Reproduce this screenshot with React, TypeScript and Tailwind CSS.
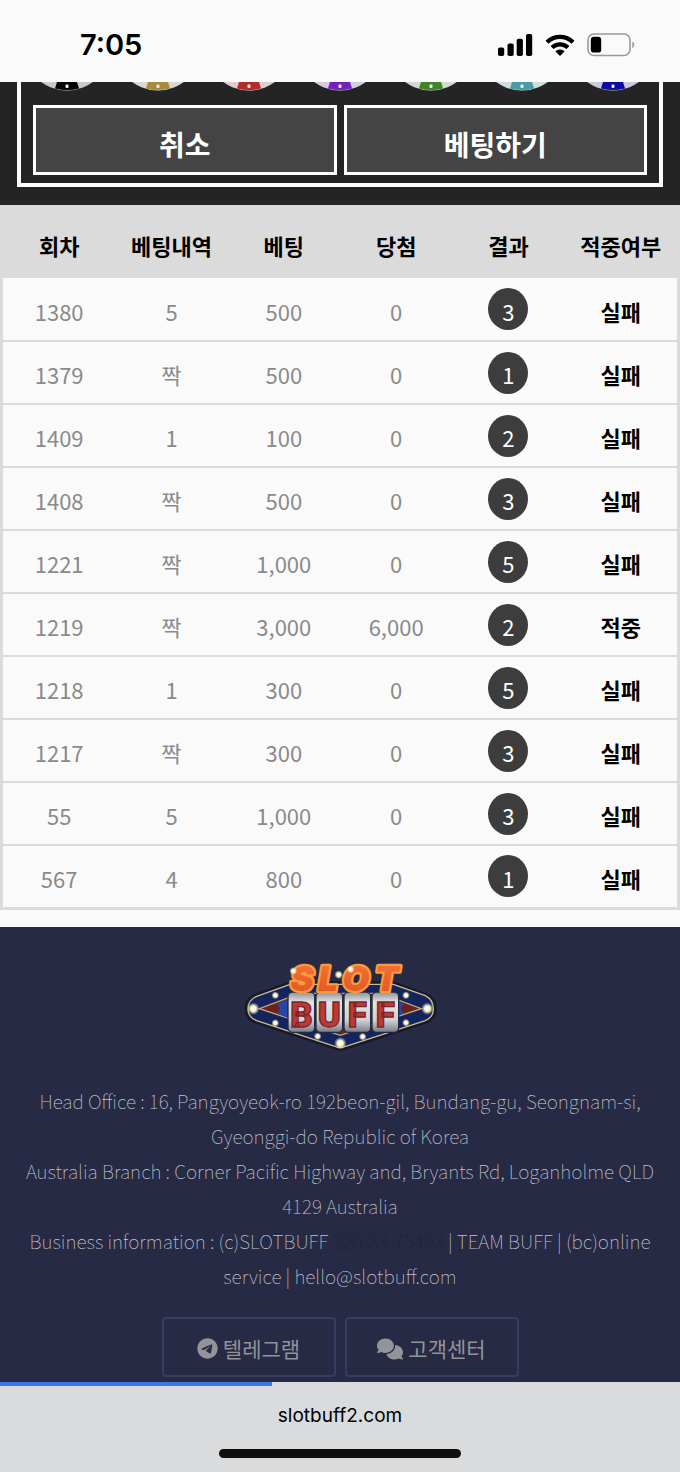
import type { JSX } from 'react';
import clsx from 'clsx';
import { FaComments, FaTelegram } from 'react-icons/fa6';

interface IBetRecord {
  round: string;
  pick: string;
  bet: string;
  win: string;
  result: number;
  status: string;
}

const CHIP_COLORS = [
  { body: '#c9c9cc', mark: '#050505' },
  { body: '#dcd8cf', mark: '#a78b3c' },
  { body: '#dfcccf', mark: '#b52b28' },
  { body: '#d5cddd', mark: '#761fbb' },
  { body: '#d2dad0', mark: '#3f8526' },
  { body: '#cddcde', mark: '#499ba5' },
  { body: '#cbcbdd', mark: '#0c0ca4' },
];

const COLUMNS = ['회차', '베팅내역', '베팅', '당첨', '결과', '적중여부'];

const RECORDS: IBetRecord[] = [
  { round: '1380', pick: '5', bet: '500', win: '0', result: 3, status: '실패' },
  { round: '1379', pick: '짝', bet: '500', win: '0', result: 1, status: '실패' },
  { round: '1409', pick: '1', bet: '100', win: '0', result: 2, status: '실패' },
  { round: '1408', pick: '짝', bet: '500', win: '0', result: 3, status: '실패' },
  { round: '1221', pick: '짝', bet: '1,000', win: '0', result: 5, status: '실패' },
  { round: '1219', pick: '짝', bet: '3,000', win: '6,000', result: 2, status: '적중' },
  { round: '1218', pick: '1', bet: '300', win: '0', result: 5, status: '실패' },
  { round: '1217', pick: '짝', bet: '300', win: '0', result: 3, status: '실패' },
  { round: '55', pick: '5', bet: '1,000', win: '0', result: 3, status: '실패' },
  { round: '567', pick: '4', bet: '800', win: '0', result: 1, status: '실패' },
];

const LOGO_BULBS = [
  [70, 188, 11],
  [136, 148, 7],
  [136, 231, 7],
  [263, 271, 7],
  [331, 292, 11],
  [398, 272, 7],
  [528, 230, 7],
  [528, 148, 7],
  [592, 188, 11],
];

function StatusBar(): JSX.Element {
  return (
    <header className="flex h-[82px] items-center justify-between bg-[#fafafa] pt-2 pr-[45px] pl-[80px]">
      <time className="font-['Inter',sans-serif] text-[29px] font-semibold text-black">
        7:05
      </time>
      <div className="flex items-center gap-3">
        <svg viewBox="0 0 35 22" className="h-[22px] w-[35px]" fill="#000">
          <rect x="0" y="13.5" width="6.2" height="8.5" rx="1.8" />
          <rect x="9.5" y="9.5" width="6.2" height="12.5" rx="1.8" />
          <rect x="18.7" y="4.8" width="6.2" height="17.2" rx="1.8" />
          <rect x="28" y="0" width="6.2" height="22" rx="1.8" />
        </svg>
        <svg viewBox="0 0 30 22" className="h-[22px] w-[30px]" fill="none" stroke="#000">
          <path d="M2 8.2a18.5 18.5 0 0 1 26 0" strokeWidth="4.2" />
          <path d="M7 13.6a11.4 11.4 0 0 1 16 0" strokeWidth="4.2" />
          <path d="M10.3 17.3a6.8 6.8 0 0 1 9.4 0L15 22z" fill="#000" stroke="none" />
        </svg>
        <svg viewBox="0 0 48 24" className="h-[24px] w-[48px]">
          <rect x="1" y="1" width="42" height="21.5" rx="6" fill="none" stroke="#999" strokeWidth="1.6" />
          <rect x="3.8" y="3.8" width="10.4" height="15.8" rx="3.2" fill="#000" />
          <path d="M45.3 8.5c2.6 1 2.6 5.6 0 6.6z" fill="#999" />
        </svg>
      </div>
    </header>
  );
}

function BetPanel(): JSX.Element {
  const buttonClass = clsx(
    'h-[70px] flex-1 border-[3px] border-white bg-[#444] pt-2',
    'text-[28px] font-bold text-white',
  );

  return (
    <section className="bg-[#242424] px-[17px] pb-[18px]">
      <div className="border-4 border-t-0 border-white px-3 pb-2">
        <div className="-mx-3 flex justify-around pb-[14px]">
          {CHIP_COLORS.map(({ body, mark }) => (
            <svg key={mark} viewBox="0 0 60 9" className="h-[9px] w-[60px]">
              <circle cx="30" cy="-35" r="43.5" fill={body} />
              <path d="M20 0h20l2 6.500q-12 3-24 0z" fill={mark} />
              <rect x="28.5" y="2.5" width="3" height="3.5" rx="1" fill="#eee" />
            </svg>
          ))}
        </div>
        <div className="flex gap-[7px]">
          <button type="button" className={buttonClass}>
            취소
          </button>
          <button type="button" className={buttonClass}>
            베팅하기
          </button>
        </div>
      </div>
    </section>
  );
}

function BetHistory(): JSX.Element {
  return (
    <div className="border-x-[3px] border-[#dbdbdb]">
      <table className="w-full table-fixed border-collapse text-center text-[22px]">
        <thead>
          <tr className="h-[73px] bg-[#dbdbdb] text-black">
            {COLUMNS.map((label) => (
              <th key={label} scope="col" className="p-0 pt-2 font-bold whitespace-nowrap">
                {label}
              </th>
            ))}
          </tr>
        </thead>
        <tbody>
          {RECORDS.map((record) => (
            <tr
              key={record.round}
              className="h-[63px] border-b-2 border-[#dbdbdb] bg-[#fafafa] text-[#8a8a8a] last:border-b-[3px]"
            >
              <td className="p-0 pt-1">{record.round}</td>
              <td className="p-0 pt-1">{record.pick}</td>
              <td className="p-0 pt-1">{record.bet}</td>
              <td className="p-0 pt-1">{record.win}</td>
              <td className="p-0">
                <span className="mx-auto flex h-[42px] w-[40px] items-center justify-center rounded-[50%] bg-[#3d3d3d] pt-1 text-white">
                  {record.result}
                </span>
              </td>
              <td className="p-0 pt-1 font-bold text-black">{record.status}</td>
            </tr>
          ))}
        </tbody>
      </table>
    </div>
  );
}

function Logo(): JSX.Element {
  return (
    <svg
      viewBox="0 0 660 345"
      role="img"
      aria-label="Slot Buff"
      className="mx-auto h-[115px] w-[220px]"
    >
      <defs>
        <linearGradient id="reel" x1="0" y1="0" x2="0" y2="1">
          <stop offset="0" stopColor="#8d8f96" />
          <stop offset="0.25" stopColor="#e4e4e6" />
          <stop offset="0.7" stopColor="#d0d1d5" />
          <stop offset="1" stopColor="#777a84" />
        </linearGradient>
        <linearGradient id="flame" x1="0" y1="0" x2="0" y2="1">
          <stop offset="0" stopColor="#f2793c" />
          <stop offset="1" stopColor="#e2531f" />
        </linearGradient>
        <radialGradient id="bulb">
          <stop offset="0" stopColor="#fff" />
          <stop offset="0.45" stopColor="#fdf6cf" />
          <stop offset="1" stopColor="#e8dca0" stopOpacity="0" />
        </radialGradient>
      </defs>
      <path
        d="M180 112L76 150Q50 160 50 188T76 226L310 303Q331 313 352 303L590 226Q614 216 614 188T590 148L490 112Z"
        fill="#101d55"
        stroke="#17192a"
        strokeWidth="12"
        strokeLinejoin="round"
      />
      <path
        d="M180 115L80 151Q54 162 54 188T80 224L312 300Q331 309 350 300L586 224Q610 214 610 188T586 149L490 115Z"
        fill="#14245f"
        stroke="#c9bd8c"
        strokeWidth="4"
      />
      <path
        d="M88 188L210 142H452L574 188L331 268Z"
        fill="#6d211d"
        stroke="#b9a977"
        strokeWidth="4"
      />
      <path d="M140 175q18 13 0 26l32 14v-54z" fill="#2447a8" />
      <path d="M522 175q-18 13 0 26l-30 14v-54z" fill="#2447a8" />
      {[174, 258, 342, 426].map((x) => (
        <rect
          key={x}
          x={x}
          y="138"
          width="80"
          height="121"
          rx="14"
          fill="url(#reel)"
          stroke="#252a40"
          strokeWidth="4"
        />
      ))}
      <g
        fill="#bc3936"
        stroke="#7c2528"
        strokeWidth="4"
        fontFamily="'Roboto', sans-serif"
        fontWeight="900"
        fontSize="104"
        textAnchor="middle"
      >
        <text x="214" y="242">B</text>
        <text x="298" y="242">U</text>
        <text x="382" y="242">F</text>
        <text x="466" y="242">F</text>
      </g>
      <g
        fill="url(#flame)"
        stroke="#fb9a3a"
        strokeWidth="14"
        paintOrder="stroke"
        strokeLinejoin="round"
        fontFamily="'Inter', sans-serif"
        fontWeight="900"
        fontStyle="italic"
        fontSize="104"
        textAnchor="middle"
      >
        <text x="216" y="134">S</text>
        <text x="294" y="134">L</text>
        <text x="378" y="134">O</text>
        <text x="470" y="134">T</text>
      </g>
      {LOGO_BULBS.map(([x, y, r]) => (
        <circle key={`${x}-${y}`} cx={x} cy={y} r={r * 1.7} fill="url(#bulb)" />
      ))}
      <circle cx="190" cy="75" r="12" fill="url(#bulb)" />
      <circle cx="326" cy="86" r="13" fill="url(#bulb)" />
      <circle cx="362" cy="70" r="12" fill="url(#bulb)" />
    </svg>
  );
}

function Footer(): JSX.Element {
  const linkClass = clsx(
    'flex h-[60px] w-[174px] items-center justify-center gap-[5px] rounded border-2 border-[#3a3a63] pt-1',
    'text-[21px] text-[#939399]',
  );

  return (
    <footer className="bg-[#262a45] px-5 pt-[19px] pb-[5px]">
      <Logo />
      <address className="mt-[22px] text-center text-[19px] leading-[35px] font-thin text-[#c4c5cc] not-italic">
        <p>
          Head Office : 16, Pangyoyeok-ro 192beon-gil, Bundang-gu, Seongnam-si,
          <br />
          Gyeonggi-do Republic of Korea
        </p>
        <p>
          Australia Branch : Corner Pacific Highway and, Bryants Rd, Loganholme QLD
          <br />
          4129 Australia
        </p>
        <p>
          Business information : (c)SLOTBUFF{' '}
          <span className="text-[#212529]">220-83-75493</span> | TEAM BUFF | (bc)online
          <br />
          service | hello@slotbuff.com
        </p>
      </address>
      <nav className="mt-6 flex justify-center gap-[9px]">
        <a href="#telegram" className={linkClass}>
          <FaTelegram className="size-[21px]" />
          텔레그램
        </a>
        <a href="#support" className={linkClass}>
          <FaComments className="size-[26px]" />
          고객센터
        </a>
      </nav>
    </footer>
  );
}

function BrowserBar(): JSX.Element {
  return (
    <div className="flex flex-col items-center bg-[#dadbdd] pb-[14px] font-['Inter',sans-serif]">
      <div className="h-1 w-full">
        <div className="h-full w-2/5 bg-[#3878ea]" />
      </div>
      <p className="mt-4 text-[19px] leading-[28px] text-black">slotbuff2.com</p>
      <div className="mt-[19px] h-[9px] w-[242px] rounded-full bg-[#101010]" />
    </div>
  );
}

export default function App(): JSX.Element {
  return (
    <div className="bg-[#fafafa] font-['Noto_Sans_CJK_KR',sans-serif]">
      <StatusBar />
      <main className="pb-[17px]">
        <BetPanel />
        <BetHistory />
      </main>
      <Footer />
      <BrowserBar />
    </div>
  );
}
